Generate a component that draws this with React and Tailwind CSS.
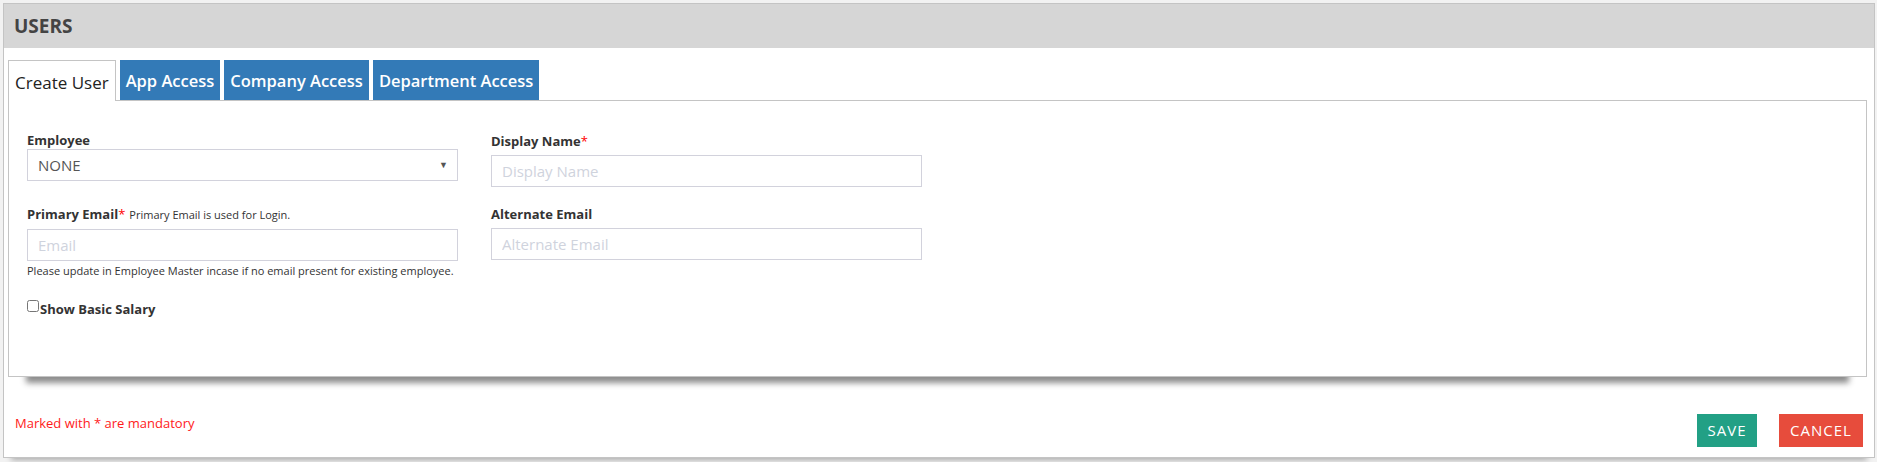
import { useState } from "react";

const tabs = ["Create User", "App Access", "Company Access", "Department Access"];

const Field = ({ label, required, note, children, gap }) => (
  <div className="flex flex-col">
    <label className={`text-[13px] font-bold text-[#333] leading-[18px] ${gap}`}>
      {label}
      {required && <span className="text-[#ff0000] font-normal">*</span>}
      {note && <span className="text-[11px] font-normal ml-[4px]">{note}</span>}
    </label>
    {children}
  </div>
);

const inputCls =
  "h-[32px] border border-[#d2d2dc] px-[10px] text-[15px] text-[#555] placeholder:text-[#cfd3dd] outline-none";

const App = () => {
  const [active, setActive] = useState(0);
  const [showSalary, setShowSalary] = useState(false);

  return (
    <div className="w-full h-[462px] bg-[#f2f2f2] pt-[3px] pl-[3px] pr-[2px] font-['Open_Sans',sans-serif]">
      <div className="h-[455px] bg-white border border-[#c4c4c4] flex flex-col shadow-[0_10px_6px_-8px_rgba(0,0,0,0.3)]">
        {/* HEADER */}
        <div className="h-[44px] bg-[#d6d6d6] flex items-center pl-[10px]">
          <h2 className="text-[19px] font-bold text-[#444]">USERS</h2>
        </div>

        {/* TABS */}
        <div className="pl-[4px] pr-[7px] mt-[12px]">
          <div className="flex items-end h-[40px] gap-[4px]">
            {tabs.map((t, i) =>
              i === active ? (
                <button
                  key={t}
                  onClick={() => setActive(i)}
                  className="h-[41px] -mb-[1px] px-[6px] pt-[3px] bg-white border border-b-0 border-[#c4c4c4] text-[17px] text-[#222] relative z-10"
                >
                  {t}
                </button>
              ) : (
                <button
                  key={t}
                  onClick={() => setActive(i)}
                  className="h-[40px] px-[6px] pt-[2px] bg-[#337ab7] text-white text-[16.5px] font-semibold"
                >
                  {t}
                </button>
              )
            )}
          </div>

          {/* CONTENT */}
          <div className="h-[277px] border border-[#c4c4c4] bg-white pl-[18px] pt-[30px] shadow-[0_24px_6px_-18px_rgba(0,0,0,0.45)]">
            <div className="flex gap-[33px]">
              <div className="w-[431px] flex flex-col">
                <Field label="Employee">
                  <div className="h-[32px] border border-[#d2d2dc] flex items-center justify-between pl-[10px] pr-[9px]">
                    <span className="text-[15px] text-[#555]">NONE</span>
                    <span className="text-[9px] text-[#555]">▼</span>
                  </div>
                </Field>
                <div className="mt-[24px]">
                  <Field label="Primary Email" required note="Primary Email is used for Login." gap="mb-[5px]">
                    <input className={inputCls} placeholder="Email" />
                  </Field>
                </div>
                <p className="text-[11px] text-[#333] mt-[2px] leading-[16px]">
                  Please update in Employee Master incase if no email present for existing employee.
                </p>
                <label className="flex items-center mt-[21px] text-[13px] font-bold text-[#333] leading-[18px]">
                  <input
                    type="checkbox"
                    checked={showSalary}
                    onChange={(e) => setShowSalary(e.target.checked)}
                    className="w-[12px] h-[12px] m-0 mr-[1px] relative -top-[3px]"
                  />
                  Show Basic Salary
                </label>
              </div>

              <div className="w-[431px] flex flex-col pt-[1px]">
                <Field label="Display Name" required gap="mb-[5px]">
                  <input className={inputCls} placeholder="Display Name" />
                </Field>
                <div className="mt-[18px]">
                  <Field label="Alternate Email" gap="mb-[5px]">
                    <input className={inputCls} placeholder="Alternate Email" />
                  </Field>
                </div>
              </div>
            </div>
          </div>
        </div>

        {/* FOOTER */}
        <div className="flex items-start justify-between pl-[11px] pr-[11px] mt-[37px]">
          <span className="text-[13px] text-[#ff1a1a] leading-[18px]">Marked with * are mandatory</span>
          <div className="flex gap-[22px]">
            <button className="h-[33px] w-[60px] bg-[#22a085] text-white text-[15px] tracking-[1px]">SAVE</button>
            <button className="h-[33px] w-[84px] bg-[#e74c3c] text-white text-[15px] tracking-[1px]">CANCEL</button>
          </div>
        </div>
      </div>
    </div>
  );
};

export default App;
